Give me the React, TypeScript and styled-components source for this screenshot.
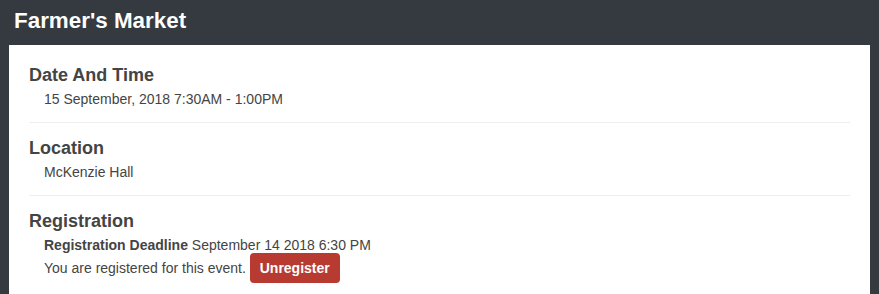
import styled, { createGlobalStyle } from 'styled-components';

const GlobalStyle = createGlobalStyle`
  html, body {
    margin: 0;
    padding: 0;
    background-color: #343a40;
    font-family: 'Liberation Sans', Arial, sans-serif;
  }
`;

const SECTIONS = [
  { title: 'Date And Time', lines: ['15 September, 2018 7:30AM - 1:00PM'] },
  { title: 'Location', lines: ['McKenzie Hall'] },
];

const App = () => {
  return (
    <>
      <GlobalStyle />
      <Header>
        <EventTitle>Farmer's Market</EventTitle>
      </Header>
      <Panel>
        {SECTIONS.map((section) => (
          <Section key={section.title}>
            <SectionTitle>{section.title}</SectionTitle>
            {section.lines.map((line) => (
              <SectionText key={line}>{line}</SectionText>
            ))}
          </Section>
        ))}
        <Section $last>
          <SectionTitle>Registration</SectionTitle>
          <SectionText>
            <Label>Registration Deadline</Label> September 14 2018 6:30 PM
          </SectionText>
          <SectionText>
            You are registered for this event.{' '}
            <DangerButton type="button">Unregister</DangerButton>
          </SectionText>
        </Section>
      </Panel>
    </>
  );
};

export default App;

export const Header = styled.header`
  padding: 8px 14px 11px;
`;

export const EventTitle = styled.h1`
  margin: 0;
  font-size: 22.4px;
  line-height: 26px;
  font-weight: 700;
  color: #ffffff;
`;

export const Panel = styled.main`
  margin: 0 9px;
  padding: 5px 20px 0;
  background-color: #ffffff;
  min-height: calc(100vh - 50px);
`;

export const Section = styled.section<{ $last?: boolean }>`
  padding: 14px 0 11px;
  border-bottom: ${(p) => (p.$last ? 'none' : '1px solid #eeeeee')};
`;

export const SectionTitle = styled.h3`
  margin: 0 0 2px;
  font-size: 18px;
  line-height: 22px;
  font-weight: 700;
  color: #444444;
`;

export const SectionText = styled.div`
  padding-left: 15px;
  font-size: 14px;
  line-height: 23px;
  color: #444444;
`;

export const Label = styled.strong`
  font-weight: 700;
`;

export const DangerButton = styled.button`
  display: inline-block;
  margin: -7px 0;
  padding: 7px 10px;
  border: none;
  border-radius: 4px;
  background-color: #b83b31;
  color: #ffffff;
  font-family: inherit;
  font-size: 14px;
  line-height: 16px;
  font-weight: 700;
  cursor: pointer;
  vertical-align: baseline;
`;
